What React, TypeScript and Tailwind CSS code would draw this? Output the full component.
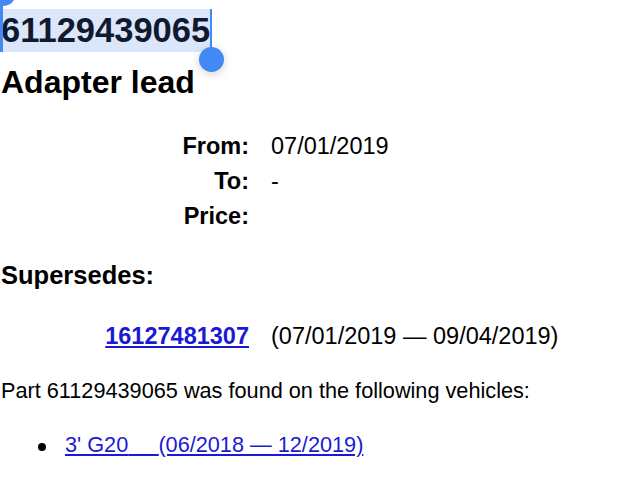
import React from "react";

export default function App() {
  return (
    <div className="relative w-[640px] h-[480px] overflow-hidden bg-white text-black pl-[1px] font-['Liberation_Sans','Helvetica','Arial',sans-serif]">
      {/* Selected part number */}
      <div className="pt-[9px] -ml-[1px]">
        <div className="relative inline-block">
          <span className="block bg-[#dce6fb] pl-[1px] pr-[2px] text-[34.5px] leading-[43px] font-bold text-[#101a2f]">
            61129439065
          </span>
          {/* left selection handle */}
          <div className="absolute left-0 top-[-9px] w-[2.5px] h-[52px] bg-[#4289f5]" />
          <div className="absolute left-[-10px] top-[-29px] w-[26px] h-[26px] rounded-full bg-[#4289f5]" />
          {/* right selection handle */}
          <div className="absolute right-0 top-0 w-[2.5px] h-[52px] bg-[#4289f5]" />
          <div className="absolute right-[-12px] top-[38px] w-[25px] h-[25px] rounded-full bg-[#4289f5] shadow-[0_2px_10px_rgba(0,0,0,0.18)]" />
        </div>
      </div>

      <div className="mt-[10px] text-[32px] leading-[40px] font-bold">Adapter lead</div>

      <div className="mt-[27px] grid grid-cols-[248px_1fr] gap-x-[22px] text-[23.5px] leading-[35px]">
        <div className="text-right font-bold">From:</div>
        <div>07/01/2019</div>
        <div className="text-right font-bold">To:</div>
        <div>-</div>
        <div className="text-right font-bold">Price:</div>
        <div></div>
      </div>

      <div className="mt-[25px] text-[25.5px] leading-[32px] font-bold">Supersedes:</div>

      <div className="mt-[28px] grid grid-cols-[248px_1fr] gap-x-[22px] text-[23.5px] leading-[34.5px]">
        <div className="text-right">
          <a href="#" className="font-bold text-[#1a1ad6] underline">
            16127481307
          </a>
        </div>
        <div>(07/01/2019 — 09/04/2019)</div>
      </div>

      <div className="mt-[22px] text-[21.7px] leading-[30px]">
        Part 61129439065 was found on the following vehicles:
      </div>

      <div className="mt-[24px] flex text-[21.7px] leading-[30px]">
        <span className="ml-[37px] mr-[19px] mt-[13px] w-[8px] h-[8px] rounded-full bg-black shrink-0" />
        <a href="#" className="text-[#1a1ad6] underline">
          3' G20{"\u00a0\u00a0\u00a0\u00a0\u00a0"}(06/2018 — 12/2019)
        </a>
      </div>
    </div>
  );
}
